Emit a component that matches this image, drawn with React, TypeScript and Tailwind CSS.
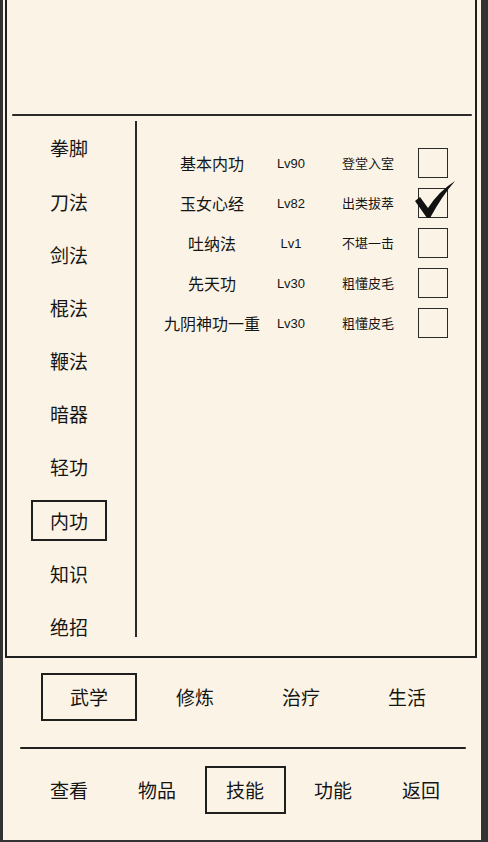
import React from "react";

const CJK = "font-['Noto_Sans_CJK_SC','Noto_Sans',sans-serif]";

const categories = ["拳脚", "刀法", "剑法", "棍法", "鞭法", "暗器", "轻功", "内功", "知识", "绝招"];

type Skill = { name: string; level: string; rank: string; equipped: boolean };

const skills: Skill[] = [
  { name: "基本内功", level: "Lv90", rank: "登堂入室", equipped: false },
  { name: "玉女心经", level: "Lv82", rank: "出类拔萃", equipped: true },
  { name: "吐纳法", level: "Lv1", rank: "不堪一击", equipped: false },
  { name: "先天功", level: "Lv30", rank: "粗懂皮毛", equipped: false },
  { name: "九阴神功一重", level: "Lv30", rank: "粗懂皮毛", equipped: false },
];

const tabs = ["武学", "修炼", "治疗", "生活"];
const nav = ["查看", "物品", "技能", "功能", "返回"];

function CheckBox({ checked }: { checked: boolean }) {
  return (
    <div className="relative ml-[12px] h-[30px] w-[30px] border-[1.5px] border-[#2a2a2a]">
      {checked ? (
        <svg className="absolute -left-[6px] -top-[10px] h-[42px] w-[44px]" viewBox="0 0 44 42">
          <path d="M2 22 L7 18 L15 29 Q26 12 42 2 Q29 17 17 39 L14 39 Z" fill="#111" />
        </svg>
      ) : null}
    </div>
  );
}

export default function App() {
  return (
    <div className={`h-[842px] w-[488px] bg-[#323232] pb-[2px] pl-[3px] pr-[7px] text-[#151515] ${CJK}`}>
      <div className="flex h-full flex-col bg-[#fbf4e6]">
        <div className="ml-[2px] mr-[4px] flex h-[658px] flex-col border-x-2 border-b-2 border-[#1f1f1f]">
          <div className="h-[114px]" />
          <div className="ml-[5px] mr-[3px] h-[2px] rounded-full bg-[#2a2a2a]" />
          <div className="flex flex-1">
            <div className="w-[124px] pt-[6px]">
              {categories.map((c) => (
                <div key={c} className="flex h-[53.2px] items-center justify-center">
                  {c === "内功" ? (
                    <div className="flex h-[41px] w-[76px] items-center justify-center border-2 border-[#1f1f1f] text-[19px]">
                      {c}
                    </div>
                  ) : (
                    <span className="text-[19px]">{c}</span>
                  )}
                </div>
              ))}
            </div>
            <div className="ml-[4px] mt-[5px] h-[516px] w-[2px] bg-[#2a2a2a]" />
            <div className="flex-1 pl-[20px] pt-[27px]">
              {skills.map((s) => (
                <div key={s.name} className="flex h-[40px] items-center">
                  <span className="w-[110px] text-center text-[16px]">{s.name}</span>
                  <span className="mt-[2px] w-[48px] text-center font-['Liberation_Sans',sans-serif] text-[13px]">{s.level}</span>
                  <span className="ml-[15px] w-[76px] text-center text-[13px]">{s.rank}</span>
                  <CheckBox checked={s.equipped} />
                </div>
              ))}
            </div>
          </div>
        </div>
        <div className="ml-[33px] flex h-[89px] pt-[15px]">
          {tabs.map((t, i) => (
            <div key={t} className="flex h-[48px] w-[106px] items-center justify-center">
              {i === 0 ? (
                <div className="flex h-[48px] w-[96px] items-center justify-center border-2 border-[#1f1f1f] text-[19px]">
                  {t}
                </div>
              ) : (
                <span className="text-[19px]">{t}</span>
              )}
            </div>
          ))}
        </div>
        <div className="ml-[17px] h-[2px] w-[446px] rounded-full bg-[#222]" />
        <div className="ml-[22px] flex pt-[17px]">
          {nav.map((n) => (
            <div key={n} className="flex h-[48px] w-[88px] items-center justify-center">
              {n === "技能" ? (
                <div className="flex h-[48px] w-[81px] items-center justify-center border-2 border-[#1f1f1f] text-[19px]">
                  {n}
                </div>
              ) : (
                <span className="text-[19px]">{n}</span>
              )}
            </div>
          ))}
        </div>
      </div>
    </div>
  );
}
